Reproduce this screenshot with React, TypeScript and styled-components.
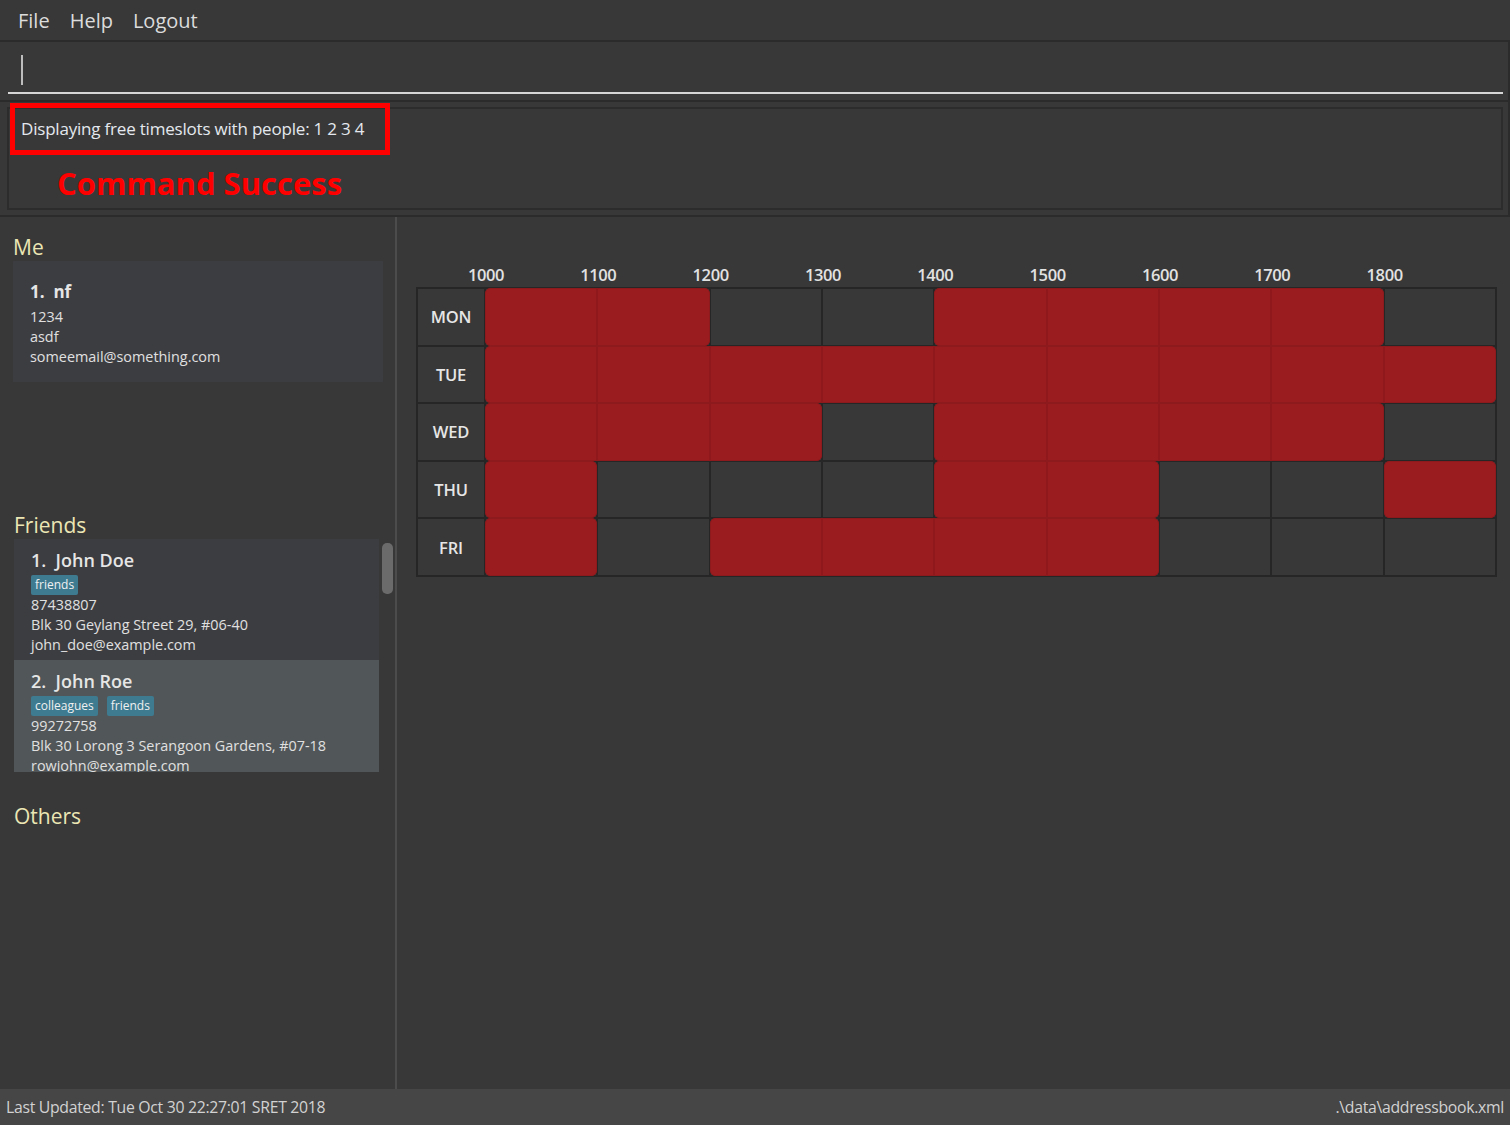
import React from "react";
import styled, { createGlobalStyle } from "styled-components";

const Global = createGlobalStyle`
  html, body { margin: 0; padding: 0; background: #383838; }
  body { font-family: "Open Sans", "Noto Sans", sans-serif; color: #e0e0e0; }
  #root { height: 100vh; }
`;

const Page = styled.div`
  height: 100vh;
  display: flex;
  flex-direction: column;
  background: #383838;
  overflow: hidden;
`;

const MenuBar = styled.div`
  height: 40px;
  border-bottom: 2px solid #2b2b2b;
  display: flex;
  align-items: center;
  padding-left: 8px;
  flex-shrink: 0;
`;

const MenuItem = styled.span`
  font-size: 20px;
  color: #dcdcdc;
  padding: 0 10px;
`;

const CommandPane = styled.div`
  height: 58px;
  border-bottom: 2px solid #2b2b2b;
  border-right: 2px solid #2b2b2b;
  padding: 0 5px 0 8px;
  flex-shrink: 0;
`;

const CommandField = styled.div`
  height: 50px;
  border-bottom: 2px solid #d6d6d6;
  display: flex;
  align-items: center;
  padding-left: 13px;
`;

const Caret = styled.div`
  width: 2px;
  height: 30px;
  margin-top: 6px;
  background: #bdbdbd;
`;

const ResultPane = styled.div`
  position: relative;
  height: 103px;
  border-bottom: 2px solid #2b2b2b;
  border-right: 2px solid #2b2b2b;
  padding: 5px 5px 5px 7px;
  flex-shrink: 0;
`;

const ResultBox = styled.div`
  height: 103px;
  border: 2px solid #2c2c2c;
  padding: 8px 12px;
  box-sizing: border-box;
`;

const ResultText = styled.div`
  font-size: 17px;
  line-height: 24px;
  color: #e4e8ee;
  letter-spacing: -0.2px;
`;

const SuccessText = styled.div`
  margin-top: 23px;
  margin-left: 36px;
  font-size: 31px;
  line-height: 38px;
  font-weight: 700;
  color: #ff0000;
`;

const Highlight = styled.div`
  position: absolute;
  left: 10px;
  top: 1px;
  width: 370px;
  height: 42px;
  border: 5px solid #ff0000;
`;

const Main = styled.div`
  flex: 1;
  display: flex;
  min-height: 0;
`;

const LeftPanel = styled.div`
  width: 397px;
  border-right: 2px solid #4c4c4c;
  padding-top: 16px;
  box-sizing: border-box;
  flex-shrink: 0;
  display: flex;
  flex-direction: column;
`;

const SectionTitle = styled.div<{ $indent: number; $gap?: number }>`
  font-size: 21px;
  line-height: 28px;
  color: #ebe6b4;
  padding-left: ${(p) => p.$indent}px;
  margin-top: ${(p) => p.$gap ?? 0}px;
`;

const Card = styled.div<{ $selected?: boolean; $height: number }>`
  height: ${(p) => p.$height}px;
  box-sizing: border-box;
  background: ${(p) => (p.$selected ? "#515658" : "#3c3d40")};
  padding: 9px 10px 0 17px;
  overflow: hidden;
  flex-shrink: 0;
`;

const MeCard = styled(Card)`
  margin-left: 13px;
  width: 370px;
  padding-top: 19px;
`;

const CardName = styled.div<{ $bold?: boolean }>`
  font-size: ${(p) => (p.$bold ? 17 : 18)}px;
  line-height: 24px;
  font-weight: ${(p) => (p.$bold ? 700 : 600)};
  color: #e6e6e6;
  margin-bottom: 3px;
  white-space: pre;
`;

const CardLine = styled.div`
  font-size: 14.4px;
  line-height: 20px;
  color: #e0e0e0;
  white-space: nowrap;
`;

const Tags = styled.div`
  display: flex;
  gap: 9px;
  height: 20px;
`;

const Tag = styled.span`
  background: #3e7b91;
  color: #f0f0f0;
  font-size: 12px;
  line-height: 20px;
  padding: 0 4px;
  border-radius: 2px;
`;

const ListWrap = styled.div`
  margin-left: 14px;
  height: 233px;
  display: flex;
  overflow: hidden;
`;

const CardColumn = styled.div`
  width: 365px;
  display: flex;
  flex-direction: column;
`;

const ScrollTrack = styled.div`
  width: 11px;
  margin-left: 3px;
  padding-top: 4px;
`;

const ScrollThumb = styled.div`
  height: 51px;
  border-radius: 5px;
  background: #6b6b6b;
`;

const RightPanel = styled.div`
  flex: 1;
  padding: 48px 13px 0 19px;
`;

const COLS = "66px repeat(9, 1fr)";

const TimeHeader = styled.div`
  display: grid;
  grid-template-columns: ${COLS};
  column-gap: 2px;
  padding: 0 2px;
  height: 22px;
`;

const TimeLabel = styled.div<{ $col: number }>`
  grid-column: ${(p) => p.$col + 2};
  font-size: 16.5px;
  font-weight: 600;
  color: #e2e2e2;
  line-height: 20px;
  letter-spacing: -0.4px;
  span {
    display: inline-block;
    transform: translateX(-50%);
  }
`;

const Table = styled.div`
  display: grid;
  grid-template-columns: ${COLS};
  grid-template-rows: repeat(5, 55.6px);
  gap: 2px;
  padding: 2px;
  background: #262626;
  width: 1081px;
  box-sizing: border-box;
`;

const DayCell = styled.div<{ $row: number }>`
  grid-row: ${(p) => p.$row + 1};
  grid-column: 1;
  background: #383838;
  display: flex;
  align-items: center;
  justify-content: center;
  font-size: 16.5px;
  font-weight: 600;
  color: #e6e6e6;
  letter-spacing: -0.2px;
`;

const SlotCell = styled.div<{ $row: number; $col: number }>`
  grid-row: ${(p) => p.$row + 1};
  grid-column: ${(p) => p.$col + 2};
  background: #383838;
`;

const FreeBlock = styled.div<{ $row: number; $start: number; $end: number }>`
  grid-row: ${(p) => p.$row + 1};
  grid-column: ${(p) => p.$start + 2} / ${(p) => p.$end + 3};
  margin: -1px;
  background: #9a1c1f;
  border: 1px solid #8d1a1d;
  border-radius: 5px;
  display: flex;
  overflow: hidden;
`;

const Segment = styled.div`
  flex: 1;
  & + & {
    border-left: 2px solid rgba(60, 0, 0, 0.12);
  }
`;

const StatusBar = styled.div`
  height: 36px;
  flex-shrink: 0;
  background: #464646;
  display: flex;
  align-items: center;
  justify-content: space-between;
  padding: 0 6px 0 6px;
  font-size: 15.8px;
  color: #d2d2d2;
  letter-spacing: -0.3px;
`;

const times = ["1000", "1100", "1200", "1300", "1400", "1500", "1600", "1700", "1800"];
const days = ["MON", "TUE", "WED", "THU", "FRI"];
const free: [number, number][][] = [
  [[0, 1], [4, 7]],
  [[0, 8]],
  [[0, 2], [4, 7]],
  [[0, 0], [4, 5], [8, 8]],
  [[0, 0], [2, 5]],
];

export default function App() {
  return (
    <Page>
      <Global />
      <MenuBar>
        <MenuItem>File</MenuItem>
        <MenuItem>Help</MenuItem>
        <MenuItem>Logout</MenuItem>
      </MenuBar>
      <CommandPane>
        <CommandField>
          <Caret />
        </CommandField>
      </CommandPane>
      <ResultPane>
        <ResultBox>
          <ResultText>Displaying free timeslots with people: 1 2 3 4</ResultText>
          <SuccessText>Command Success</SuccessText>
        </ResultBox>
        <Highlight />
      </ResultPane>
      <Main>
        <LeftPanel>
          <SectionTitle $indent={13}>Me</SectionTitle>
          <MeCard $height={121}>
            <CardName $bold>{"1.  nf"}</CardName>
            <CardLine>1234</CardLine>
            <CardLine>asdf</CardLine>
            <CardLine>someemail@something.com</CardLine>
          </MeCard>
          <SectionTitle $indent={14} $gap={129}>Friends</SectionTitle>
          <ListWrap>
            <CardColumn>
              <Card $height={121}>
                <CardName>{"1.  John Doe"}</CardName>
                <Tags>
                  <Tag>friends</Tag>
                </Tags>
                <CardLine>87438807</CardLine>
                <CardLine>Blk 30 Geylang Street 29, #06-40</CardLine>
                <CardLine>john_doe@example.com</CardLine>
              </Card>
              <Card $selected $height={121}>
                <CardName>{"2.  John Roe"}</CardName>
                <Tags>
                  <Tag>colleagues</Tag>
                  <Tag>friends</Tag>
                </Tags>
                <CardLine>99272758</CardLine>
                <CardLine>Blk 30 Lorong 3 Serangoon Gardens, #07-18</CardLine>
                <CardLine>rowjohn@example.com</CardLine>
              </Card>
            </CardColumn>
            <ScrollTrack>
              <ScrollThumb />
            </ScrollTrack>
          </ListWrap>
          <SectionTitle $indent={14} $gap={30}>Others</SectionTitle>
        </LeftPanel>
        <RightPanel>
          <TimeHeader>
            {times.map((t, i) => (
              <TimeLabel key={t} $col={i}>
                <span>{t}</span>
              </TimeLabel>
            ))}
          </TimeHeader>
          <Table>
            {days.map((d, r) => (
              <React.Fragment key={d}>
                <DayCell $row={r}>{d}</DayCell>
                {times.map((t, c) => (
                  <SlotCell key={t} $row={r} $col={c} />
                ))}
                {free[r].map(([s, e]) => (
                  <FreeBlock key={s} $row={r} $start={s} $end={e}>
                    {Array.from({ length: e - s + 1 }).map((_, k) => (
                      <Segment key={k} />
                    ))}
                  </FreeBlock>
                ))}
              </React.Fragment>
            ))}
          </Table>
        </RightPanel>
      </Main>
      <StatusBar>
        <span>Last Updated: Tue Oct 30 22:27:01 SRET 2018</span>
        <span>.\data\addressbook.xml</span>
      </StatusBar>
    </Page>
  );
}
